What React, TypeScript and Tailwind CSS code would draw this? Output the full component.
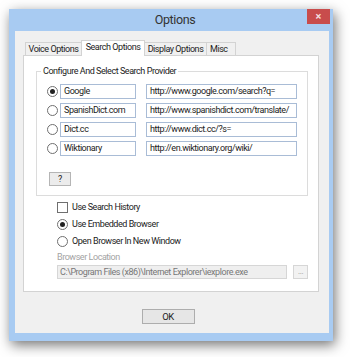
import React from "react";

const font = { fontFamily: 'Roboto, "Liberation Sans", Arial, sans-serif' };

function Radio({ checked }: { checked?: boolean }) {
  return (
    <span className="flex h-[11px] w-[11px] shrink-0 items-center justify-center rounded-full border border-[#6f6f6f] bg-white">
      {checked ? <span className="h-[5px] w-[5px] rounded-full bg-[#222]" /> : null}
    </span>
  );
}

function Field({ w, children }: { w: string; children: React.ReactNode }) {
  return (
    <div className={`flex h-[15px] ${w} items-center border border-[#a9bcd6] bg-white pl-[3px] text-[9px] leading-none text-[#222] whitespace-nowrap overflow-hidden`}>
      {children}
    </div>
  );
}

const providers = [
  { name: "Google", url: "http://www.google.com/search?q=", checked: true },
  { name: "SpanishDict.com", url: "http://www.spanishdict.com/translate/" },
  { name: "Dict.cc", url: "http://www.dict.cc/?s=" },
  { name: "Wiktionary", url: "http://en.wiktionary.org/wiki/" },
];

export default function App() {
  return (
    <div className="h-[357px] w-[350px] bg-white pl-[9px] pt-[9px] tracking-[-0.45px]" style={font}>
      <div className="flex h-[332px] w-[324px] flex-col bg-[#a8cbf2] pb-[8px] pl-[6px] pr-[4px] shadow-[2px_4px_12px_rgba(0,0,0,0.55)]">
        {/* title bar */}
        <div className="relative flex h-[22px] shrink-0 items-center justify-center">
          <span className="pl-[6px] pt-[1px] text-[12.5px] tracking-[-0.4px] text-[#333]">Options</span>
          <div className="absolute right-[-1px] top-0 flex h-[15px] w-[23px] items-center justify-center bg-[#c84c4c] text-[11px] font-bold leading-none tracking-normal text-[#f4dede]">
            ×
          </div>
        </div>
        {/* client */}
        <div className="flex flex-1 flex-col bg-[#f0f0f0] pl-[8px] pr-[10px] pt-[9px]">
          {/* tabs */}
          <div className="relative z-10 flex h-[15px] items-end pl-[2px] text-[9px] leading-none text-[#222]">
            <div className="flex h-[13px] w-[56px] items-center justify-center border border-b-0 border-r-0 border-[#d3d3d3] bg-[#f0f0f0] whitespace-nowrap">Voice Options</div>
            <div className="mb-[-1px] flex h-[16px] w-[64px] items-center justify-center border border-b-0 border-[#d3d3d3] bg-white pb-[2px] whitespace-nowrap">Search Options</div>
            <div className="flex h-[13px] w-[62px] items-center justify-center border border-b-0 border-l-0 border-[#d3d3d3] bg-[#f0f0f0] whitespace-nowrap">Display Options</div>
            <div className="flex h-[13px] w-[29px] items-center border border-b-0 border-l-0 border-[#d3d3d3] bg-[#f0f0f0] pl-[3px]">Misc</div>
          </div>
          {/* panel */}
          <div className="flex h-[237px] flex-col border border-[#d3d3d3] bg-white pl-[12px] pr-[10px] pt-[15px] text-[9px] text-[#222]">
            {/* group box */}
            <div className="relative flex h-[125px] flex-col border border-[#dcdcdc] pl-[10px] pr-[10px] pt-[12px]">
              <span className="absolute left-[4px] top-[-7px] bg-white px-[2px] leading-[13px]">Configure And Select Search Provider</span>
              <div className="flex flex-col gap-[4px]">
                {providers.map((p) => (
                  <div key={p.name} className="flex items-center">
                    <Radio checked={p.checked} />
                    <div className="ml-[2px]">
                      <Field w="w-[76px]">{p.name}</Field>
                    </div>
                    <div className="ml-[10px]">
                      <Field w="w-[151px]">{p.url}</Field>
                    </div>
                  </div>
                ))}
              </div>
              <div className="ml-[2px] mt-[16px] flex h-[14px] w-[22px] items-center justify-center border border-[#b5b5b5] bg-[#ececec] text-[9px] leading-none">
                ?
              </div>
            </div>
            {/* options */}
            <div className="ml-[21px] mt-[6px] flex flex-col gap-[6px] leading-none">
              <div className="flex items-center">
                <span className="h-[11px] w-[11px] border border-[#6f6f6f] bg-white" />
                <span className="ml-[4px]">Use Search History</span>
              </div>
              <div className="flex items-center">
                <Radio checked />
                <span className="ml-[4px]">Use Embedded Browser</span>
              </div>
              <div className="flex items-center">
                <Radio />
                <span className="ml-[4px]">Open Browser In New Window</span>
              </div>
            </div>
            <div className="ml-[21px] mt-[6px] leading-none text-[#a3a3a3]">Browser Location</div>
            <div className="ml-[21px] mt-[3px] flex items-center">
              <div className="flex h-[14px] w-[233px] items-center overflow-hidden whitespace-nowrap border border-[#d6d6d6] bg-[#efefef] pl-[2px] text-[9px] leading-none text-[#777]">
                C:\Program Files (x86)\Internet Explorer\iexplore.exe
              </div>
              <div className="ml-[6px] flex h-[14px] w-[15px] items-center justify-center border border-[#d6d6d6] bg-[#f2f2f2] text-[8px] leading-none text-[#999]">
                ...
              </div>
            </div>
          </div>
          {/* bottom */}
          <div className="flex flex-1 items-start justify-center pt-[17px]">
            <div className="ml-[-6px] flex h-[15px] w-[53px] items-center justify-center border border-[#adadad] bg-[#e6e6e6] text-[9.5px] leading-none text-[#222]">
              OK
            </div>
          </div>
        </div>
      </div>
    </div>
  );
}
